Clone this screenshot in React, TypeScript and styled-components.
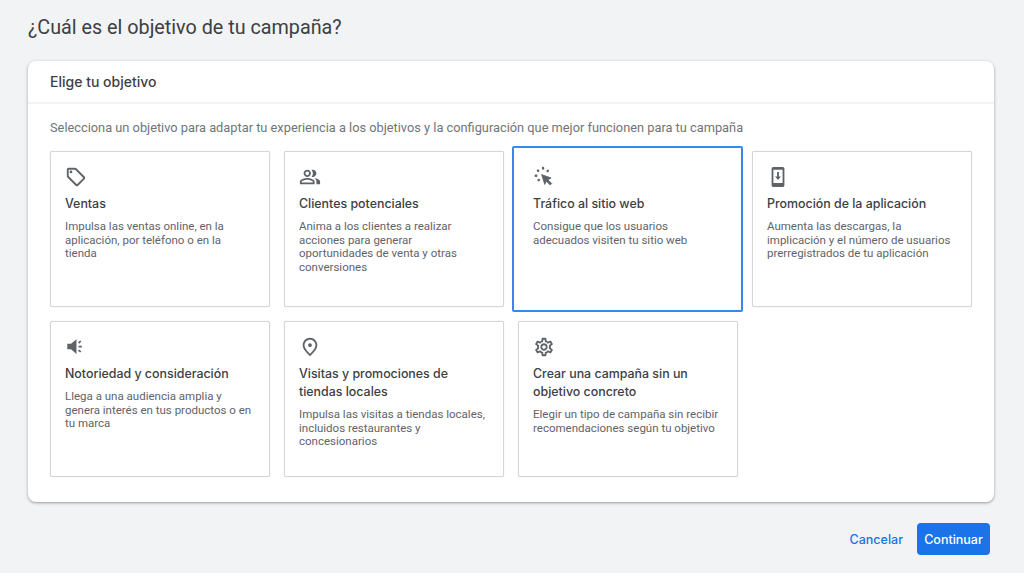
import { ReactNode } from "react";
import styled, { createGlobalStyle } from "styled-components";
import {
  MdOutlineLocalOffer,
  MdOutlinePeopleAlt,
  MdOutlineSettings,
  MdOutlinePlace,
} from "react-icons/md";

const TrafficIcon = () => (
  <svg width="22" height="22" viewBox="0 0 24 24" fill="currentColor">
    <path
      d="M9.4 9.4l10.4 3.7-3.6 1.8 4.2 4.2-1.6 1.6-4.2-4.2-1.8 3.6z"
      stroke="currentColor"
      strokeWidth="0.9"
      strokeLinejoin="round"
    />
    <g stroke="currentColor" strokeWidth="2.6" strokeLinecap="round">
      <path d="M5.4 5l.3.3M11 2.2v.5M16.2 5.2l-.3.3M3 10.6h.5M6.4 15.2l-.3.3" />
    </g>
  </svg>
);

const PhoneIcon = () => (
  <svg width="22" height="22" viewBox="0 0 24 24" fill="currentColor">
    <path
      fillRule="evenodd"
      d="M17 1H7C5.9 1 5 1.9 5 3v18c0 1.1.9 2 2 2h10c1.1 0 2-.9 2-2V3c0-1.1-.9-2-2-2zM7 4h10v14.5H7V4z"
    />
    <path d="M11 6.5h2v5h2.2L12 15.4l-3.2-3.9H11z" />
  </svg>
);

const CampaignIcon = () => (
  <svg width="22" height="22" viewBox="0 0 24 24" fill="currentColor">
    <path d="M2.5 8.5h4l6-5v16l-6-5h-4z" />
    <path
      d="M14.8 7.6l2.4-2M14.8 11.5h3.6M14.8 15.4l2.4 2"
      stroke="currentColor"
      strokeWidth="1.9"
      fill="none"
    />
  </svg>
);

type Objective = {
  icon: ReactNode;
  title: string;
  text: string;
  selected?: boolean;
};

const objectives: Objective[] = [
  {
    icon: <MdOutlineLocalOffer size={22} />,
    title: "Ventas",
    text: "Impulsa las ventas online, en la aplicación, por teléfono o en la tienda",
  },
  {
    icon: <MdOutlinePeopleAlt size={22} />,
    title: "Clientes potenciales",
    text: "Anima a los clientes a realizar acciones para generar oportunidades de venta y otras conversiones",
  },
  {
    icon: <TrafficIcon />,
    title: "Tráfico al sitio web",
    text: "Consigue que los usuarios adecuados visiten tu sitio web",
    selected: true,
  },
  {
    icon: <PhoneIcon />,
    title: "Promoción de la aplicación",
    text: "Aumenta las descargas, la implicación y el número de usuarios prerregistrados de tu aplicación",
  },
  {
    icon: <CampaignIcon />,
    title: "Notoriedad y consideración",
    text: "Llega a una audiencia amplia y genera interés en tus productos o en tu marca",
  },
  {
    icon: <MdOutlinePlace size={22} />,
    title: "Visitas y promociones de tiendas locales",
    text: "Impulsa las visitas a tiendas locales, incluidos restaurantes y concesionarios",
  },
  {
    icon: <MdOutlineSettings size={22} />,
    title: "Crear una campaña sin un objetivo concreto",
    text: "Elegir un tipo de campaña sin recibir recomendaciones según tu objetivo",
  },
];

export default function App() {
  return (
    <>
      <GlobalStyle />
      <Page>
        <Heading>¿Cuál es el objetivo de tu campaña?</Heading>
        <Panel>
          <PanelHeader>Elige tu objetivo</PanelHeader>
          <PanelBody>
            <Intro>
              Selecciona un objetivo para adaptar tu experiencia a los objetivos y la configuración
              que mejor funcionen para tu campaña
            </Intro>
            <CardGrid>
              {objectives.map((item) => (
                <Card key={item.title} $selected={item.selected}>
                  <IconSlot>{item.icon}</IconSlot>
                  <CardTitle>{item.title}</CardTitle>
                  <CardText>{item.text}</CardText>
                </Card>
              ))}
            </CardGrid>
          </PanelBody>
        </Panel>
        <Footer>
          <CancelButton>Cancelar</CancelButton>
          <ContinueButton>Continuar</ContinueButton>
        </Footer>
      </Page>
    </>
  );
}

const GlobalStyle = createGlobalStyle`
  html, body {
    margin: 0;
    padding: 0;
    height: 100%;
    background: #f1f3f5;
    overflow: hidden;
  }
  * {
    box-sizing: border-box;
  }
`;

const Page = styled.div`
  width: 1024px;
  height: 573px;
  padding: 0 30px 0 28px;
  font-family: Roboto, "Liberation Sans", sans-serif;
  color: #3c4043;
`;

const Heading = styled.h1`
  margin: 0;
  height: 61px;
  padding-top: 15px;
  font-size: 19.75px;
  line-height: 26px;
  font-weight: 400;
  color: #3c4043;
`;

const Panel = styled.section`
  width: 966px;
  height: 441px;
  background: #fff;
  border-radius: 8px;
  box-shadow: 0 1px 2px rgba(60, 64, 67, 0.3), 0 1px 3px 1px rgba(60, 64, 67, 0.15);
`;

const PanelHeader = styled.div`
  height: 43px;
  padding: 0 22px;
  display: flex;
  align-items: center;
  font-family: Inter, Roboto, sans-serif;
  font-size: 14px;
  font-weight: 500;
  color: #3c4043;
  border-bottom: 2px solid #f1f3f4;
`;

const PanelBody = styled.div`
  padding: 15px 22px 0;
`;

const Intro = styled.p`
  margin: 0;
  height: 32px;
  font-size: 12.8px;
  line-height: 17px;
  color: #70757a;
  white-space: nowrap;
`;

const CardGrid = styled.div`
  display: grid;
  grid-template-columns: repeat(4, 220px);
  grid-auto-rows: 156px;
  gap: 14px;
`;

const Card = styled.div<{ $selected?: boolean }>`
  position: relative;
  padding: 14px 14px 0;
  background: #fff;
  border: 1px solid ${({ $selected }) => ($selected ? "transparent" : "#d4d6da")};
  border-radius: 2px;
  box-shadow: ${({ $selected }) => ($selected ? "none" : "0 0 1px rgba(60, 64, 67, 0.25)")};

  ${({ $selected }) =>
    $selected &&
    `
    &::after {
      content: "";
      position: absolute;
      inset: -6px -6px -6px -7px;
      border: 2px solid #3b86ea;
      border-radius: 2px;
      pointer-events: none;
    }
  `}
`;

const IconSlot = styled.div`
  width: 22px;
  height: 22px;
  margin-bottom: 7px;
  color: #5f6368;

  svg {
    display: block;
  }
`;

const CardTitle = styled.h3`
  margin: 0 0 7px;
  font-family: Inter, Roboto, sans-serif;
  font-size: 12.4px;
  line-height: 18px;
  font-weight: 500;
  color: #3c4043;
`;

const CardText = styled.p`
  margin: 0;
  font-size: 11.5px;
  line-height: 13.7px;
  color: #5f6368;
`;

const Footer = styled.div`
  display: flex;
  justify-content: flex-end;
  align-items: center;
  gap: 14px;
  width: 962px;
  height: 32px;
  margin-top: 21px;
`;

const CancelButton = styled.button`
  border: 0;
  background: none;
  padding: 0;
  font-family: Inter, Roboto, sans-serif;
  font-size: 12.5px;
  font-weight: 500;
  color: #1a73e8;
`;

const ContinueButton = styled.button`
  width: 73px;
  height: 32px;
  border: 0;
  border-radius: 4px;
  background: #1a73e8;
  padding: 0;
  font-family: Inter, Roboto, sans-serif;
  font-size: 12.5px;
  font-weight: 500;
  color: #fff;
`;
